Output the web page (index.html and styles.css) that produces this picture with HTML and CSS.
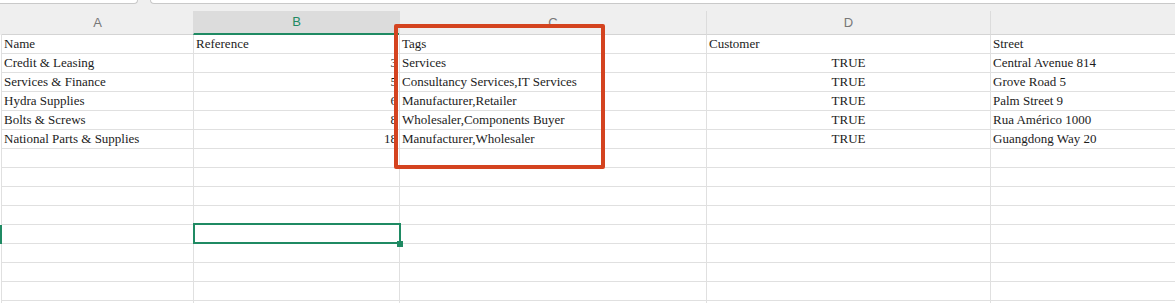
FILE: index.html
```html
<!DOCTYPE html>
<html>
<head>
<meta charset="utf-8">
<link rel="stylesheet" href="styles.css">
</head>
<body>
<div class="topbar"><div class="tb-left"></div><div class="tb-right"></div></div>
<div class="sheet">
  <div class="row head">
    <div class="cell hc">A</div>
    <div class="cell hc hsel">B</div>
    <div class="cell hc">C</div>
    <div class="cell hc">D</div>
    <div class="cell hc"></div>
  </div>
  <div class="row"><div class="cell">Name</div><div class="cell">Reference</div><div class="cell">Tags</div><div class="cell">Customer</div><div class="cell">Street</div></div>
  <div class="row"><div class="cell">Credit &amp; Leasing</div><div class="cell num">3</div><div class="cell">Services</div><div class="cell ctr">TRUE</div><div class="cell">Central Avenue 814</div></div>
  <div class="row"><div class="cell">Services &amp; Finance</div><div class="cell num">5</div><div class="cell">Consultancy Services,IT Services</div><div class="cell ctr">TRUE</div><div class="cell">Grove Road 5</div></div>
  <div class="row"><div class="cell">Hydra Supplies</div><div class="cell num">6</div><div class="cell">Manufacturer,Retailer</div><div class="cell ctr">TRUE</div><div class="cell">Palm Street 9</div></div>
  <div class="row"><div class="cell">Bolts &amp; Screws</div><div class="cell num">8</div><div class="cell">Wholesaler,Components Buyer</div><div class="cell ctr">TRUE</div><div class="cell">Rua Américo 1000</div></div>
  <div class="row"><div class="cell">National Parts &amp; Supplies</div><div class="cell num">18</div><div class="cell">Manufacturer,Wholesaler</div><div class="cell ctr">TRUE</div><div class="cell">Guangdong Way 20</div></div>
  <div class="row"><div class="cell"></div><div class="cell"></div><div class="cell"></div><div class="cell"></div><div class="cell"></div></div>
  <div class="row"><div class="cell"></div><div class="cell"></div><div class="cell"></div><div class="cell"></div><div class="cell"></div></div>
  <div class="row"><div class="cell"></div><div class="cell"></div><div class="cell"></div><div class="cell"></div><div class="cell"></div></div>
  <div class="row"><div class="cell"></div><div class="cell"></div><div class="cell"></div><div class="cell"></div><div class="cell"></div></div>
  <div class="row selrow"><div class="cell"></div><div class="cell active"><span class="handle"></span></div><div class="cell"></div><div class="cell"></div><div class="cell"></div></div>
  <div class="row"><div class="cell"></div><div class="cell"></div><div class="cell"></div><div class="cell"></div><div class="cell"></div></div>
  <div class="row"><div class="cell"></div><div class="cell"></div><div class="cell"></div><div class="cell"></div><div class="cell"></div></div>
  <div class="row"><div class="cell"></div><div class="cell"></div><div class="cell"></div><div class="cell"></div><div class="cell"></div></div>
  <div class="row"><div class="cell"></div><div class="cell"></div><div class="cell"></div><div class="cell"></div><div class="cell"></div></div>
  <div class="annot"></div>
</div>
</body>
</html>
```
FILE: styles.css
```css
html, body {
  margin: 0;
  padding: 0;
  background: #efefef;
  overflow: hidden;
  height: 303px;
}
.topbar {
  display: flex;
  height: 4px;
  margin-bottom: 7px;
}
.tb-left {
  width: 137px;
  height: 3px;
  background: #fff;
  border-bottom: 1px solid #c9c9c9;
  border-right: 1px solid #c9c9c9;
  border-bottom-right-radius: 4px;
}
.tb-right {
  flex: 1;
  margin-left: 12px;
  height: 3px;
  background: #fff;
  border-bottom: 1px solid #c9c9c9;
  border-left: 1px solid #c9c9c9;
  border-bottom-left-radius: 4px;
}
.sheet {
  position: relative;
  height: 292px;
  overflow: hidden;
}
.row {
  display: grid;
  grid-template-columns: 192px 206px 307px 284px 1fr;
  padding-left: 1px;
  height: 19px;
  background: #fff;
  position: relative;
}
.row.head {
  height: 24px;
  background: #efefef;
}
.cell {
  border-left: 1px solid #e0e0e0;
  border-bottom: 1px solid #e0e0e0;
  padding: 0 2px;
  font-family: "Liberation Serif", "DejaVu Serif", serif;
  font-size: 13px;
  line-height: 18px;
  color: #1c1c1c;
  white-space: nowrap;
  overflow: hidden;
  position: relative;
}
.cell.num { text-align: right; }
.cell.ctr { text-align: center; }
.hc {
  font-family: "Liberation Sans", Arial, sans-serif;
  font-size: 13px;
  color: #777;
  line-height: 23px;
  text-align: center;
  border-left-color: #dcdcdc;
  border-bottom-color: #d4d4d4;
  background: #efefef;
}
.hc:first-child { border-left-color: #efefef; }
.hsel {
  background: #dcdcdc;
  color: #1f8a63;
  border-bottom: 2px solid #1f8a63;
  line-height: 22px;
}
.selrow::before {
  content: "";
  position: absolute;
  left: 0;
  top: 0;
  width: 2px;
  height: 19px;
  background: #1f8a63;
  z-index: 2;
}
.cell.active { overflow: visible; z-index: 3; }
.cell.active::after {
  content: "";
  position: absolute;
  left: -1px;
  top: -2px;
  right: -2px;
  bottom: -1px;
  border: 2px solid #1f8a63;
}
.handle {
  position: absolute;
  right: -4px;
  bottom: -4px;
  width: 6px;
  height: 6px;
  background: #1f8a63;
  z-index: 4;
}
.annot {
  position: absolute;
  left: 394px;
  top: 13px;
  width: 203px;
  height: 137px;
  border: 4px solid #d4431f;
  border-radius: 2px;
  z-index: 5;
}
```
